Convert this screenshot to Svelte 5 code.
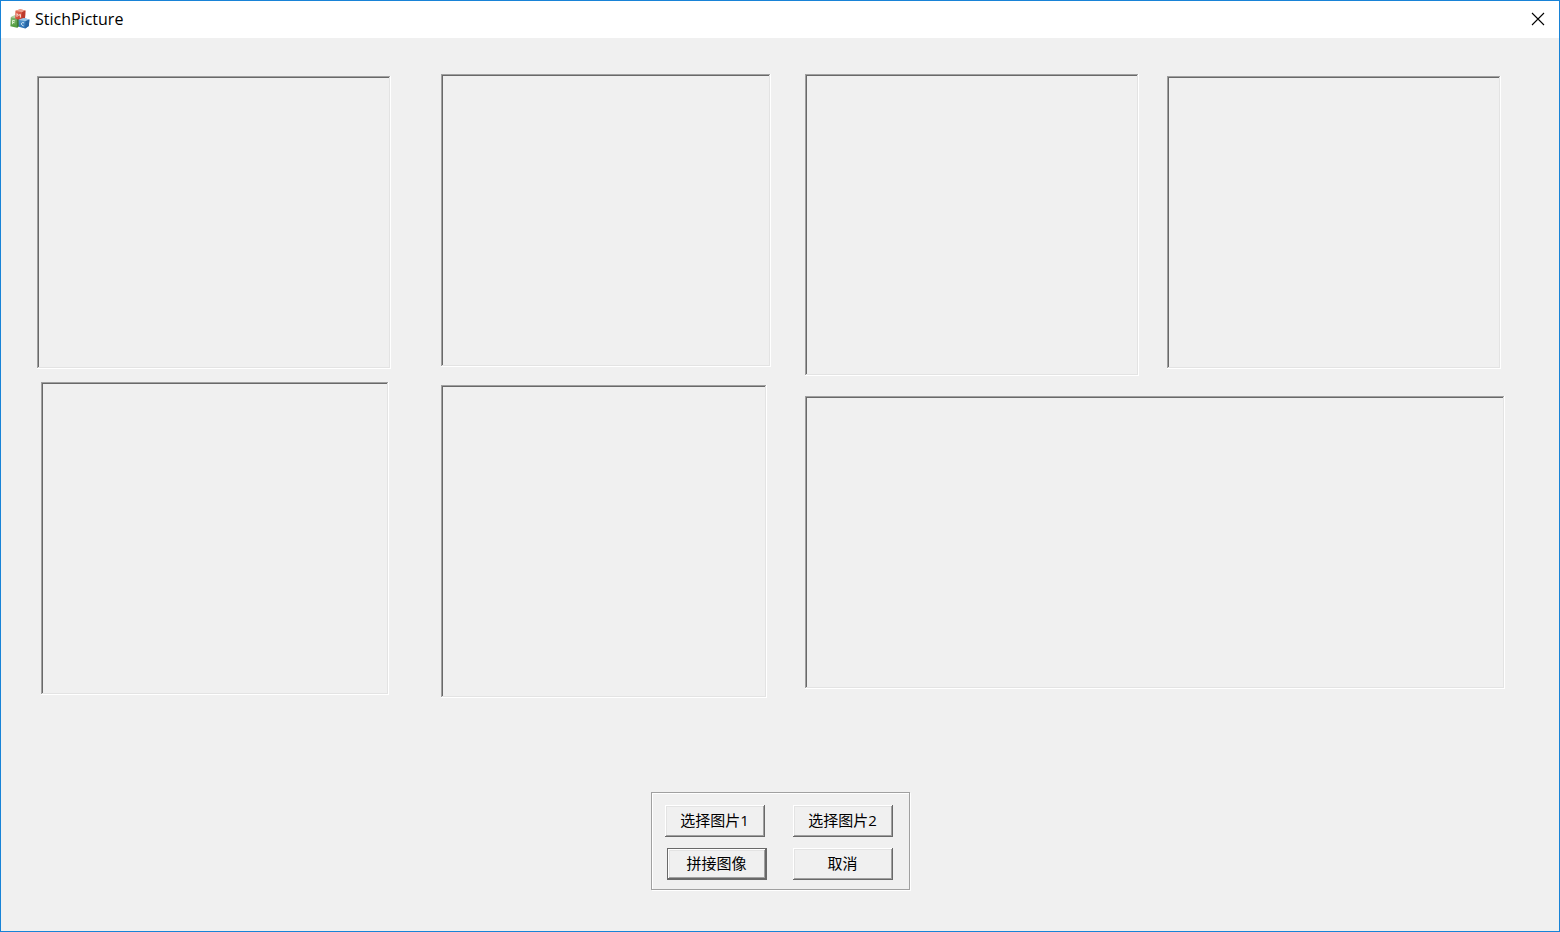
<script>
  const frames = ['a', 'b', 'c', 'd', 'e', 'f', 'g'];
</script>

<div class="window">
  <header class="titlebar">
    <svg class="logo" width="20" height="20" viewBox="0 0 20 20" aria-hidden="true">
      <defs>
        <linearGradient id="red" x1="0" y1="0" x2="1" y2="1">
          <stop offset="0" stop-color="#e8705a" />
          <stop offset="1" stop-color="#bf3424" />
        </linearGradient>
        <linearGradient id="green" x1="0" y1="0" x2="0" y2="1">
          <stop offset="0" stop-color="#86b877" />
          <stop offset="1" stop-color="#4d9a38" />
        </linearGradient>
        <linearGradient id="blue" x1="0" y1="0" x2="0" y2="1">
          <stop offset="0" stop-color="#5d9fd2" />
          <stop offset="1" stop-color="#2a70b4" />
        </linearGradient>
      </defs>
      <path d="M.8 8.2 4.2 6.6 9.4 8 9.2 17 7 18.8 .4 17.2Z" fill="url(#green)" />
      <path d="M.8 8.2 4.2 6.6 9.4 8 6.8 9.6Z" fill="#b4d3a6" />
      <path d="M6.8 9.6 9.4 8 9.2 17 7 18.8Z" fill="#3f7d35" />
      <path d="M5.4 1.8 10.2.2 15.4 1.6 15 9.6 11.8 11.4 5.2 9.8Z" fill="url(#red)" />
      <path d="M5.4 1.8 10.2.2 15.4 1.6 12 3.2Z" fill="#eda08e" />
      <path d="M12 3.2 15.4 1.6 15 9.6 11.8 11.4Z" fill="#bd3a2c" />
      <path d="M8.6 10.8 13.8 9 19.4 10.4 18.8 17 15.2 19.4 8.8 17.8Z" fill="url(#blue)" />
      <path d="M8.6 10.8 13.8 9 19.4 10.4 15.4 12.2Z" fill="#9cc6e6" />
      <path d="M15.4 12.2 19.4 10.4 18.8 17 15.2 19.4Z" fill="#2765a4" />
      <path d="M7 7.8V4.6L8.6 6.4 10.4 5.4V8.6" fill="none" stroke="#fbe6df" />
      <path d="M2.6 15.2V11.3L5 12M2.6 13.2 4.6 13.8" fill="none" stroke="#e2f4d4" />
      <path d="M14 14C11 12.4 10.4 16.2 13.6 16.9" fill="none" stroke="#e4f2fc" />
    </svg>
    <h1>StichPicture</h1>
    <button class="close" aria-label="Close">
      <svg width="14" height="14" viewBox="0 0 14 14" aria-hidden="true">
        <path d="M1 1 13 13M13 1 1 13" stroke="#000" stroke-width="1.1" />
      </svg>
    </button>
  </header>

  <main>
    <section class="frames">
      {#each frames as name}
        <div class="frame {name}"></div>
      {/each}
    </section>

    <div class="actions">
      <button>选择图片1</button>
      <button>选择图片2</button>
      <button class="default">拼接图像</button>
      <button>取消</button>
    </div>
  </main>
</div>

<style>
  :global(body) {
    margin: 0;
  }

  .window {
    box-sizing: border-box;
    min-height: 100vh;
    display: flex;
    flex-direction: column;
    border: 1px solid #1883d7;
    background: #f0f0f0;
    color: #000;
    font-family: 'Open Sans', 'Noto Sans CJK SC', sans-serif;
  }

  .titlebar {
    box-sizing: border-box;
    display: flex;
    align-items: center;
    height: 37px;
    padding: 0 14px 2px 9px;
    background: #fff;
  }

  .logo {
    margin-right: 5px;
  }

  h1 {
    flex: 1;
    margin: 0;
    font-size: 16px;
    line-height: 20px;
    font-weight: 400;
  }

  .close {
    display: flex;
    padding: 0;
    border: 0;
    background: none;
  }

  main {
    flex: 1;
    padding: 36px 0 40px;
  }

  .frames {
    display: grid;
    grid-template-columns: minmax(0, 404fr) minmax(0, 364fr) minmax(0, 362fr) minmax(0, 338fr);
    align-items: start;
    row-gap: 6px;
    padding: 0 54px 0 36px;
  }

  .frame {
    height: 293px;
    box-shadow: inset -1px -1px 0 #fff, inset 1px 1px 0 #a0a0a0, inset -2px -2px 0 #e3e3e3,
      inset 2px 2px 0 #696969;
  }

  .a {
    margin: 2px 50px 0 0;
  }

  .b {
    margin-right: 34px;
  }

  .c {
    height: 302px;
    margin-right: 28px;
  }

  .d {
    margin: 2px 4px 0 0;
  }

  .e {
    height: 313px;
    margin: 0 52px 0 4px;
  }

  .f {
    height: 313px;
    margin: 3px 38px 0 0;
  }

  .g {
    grid-column: span 2;
    margin-top: 14px;
  }

  .actions {
    display: grid;
    grid-template-columns: 100px 100px;
    gap: 11px 28px;
    width: fit-content;
    margin: 94px auto 0;
    padding: 12px 16px 9px 13px;
    border: 1px solid #a0a0a0;
    box-shadow: 1px 1px 0 #fff, inset 1px 1px 0 #fff;
  }

  .actions button {
    height: 32px;
    padding: 0 0 2px;
    border: 0;
    border-radius: 0;
    background: #f0f0f0;
    box-shadow: inset -1px -1px 0 #696969, inset 1px 1px 0 #fff, inset -2px -2px 0 #a0a0a0,
      inset 2px 2px 0 #e3e3e3;
    color: #000;
    font-family: inherit;
    font-size: 15px;
    line-height: 20px;
    white-space: nowrap;
  }

  .actions .default {
    margin: 0 -2px 0 2px;
    box-shadow: inset 0 0 0 1px #696969, inset -2px -2px 0 #696969, inset 2px 2px 0 #fff,
      inset -3px -3px 0 #a0a0a0, inset 3px 3px 0 #e3e3e3;
  }
</style>
